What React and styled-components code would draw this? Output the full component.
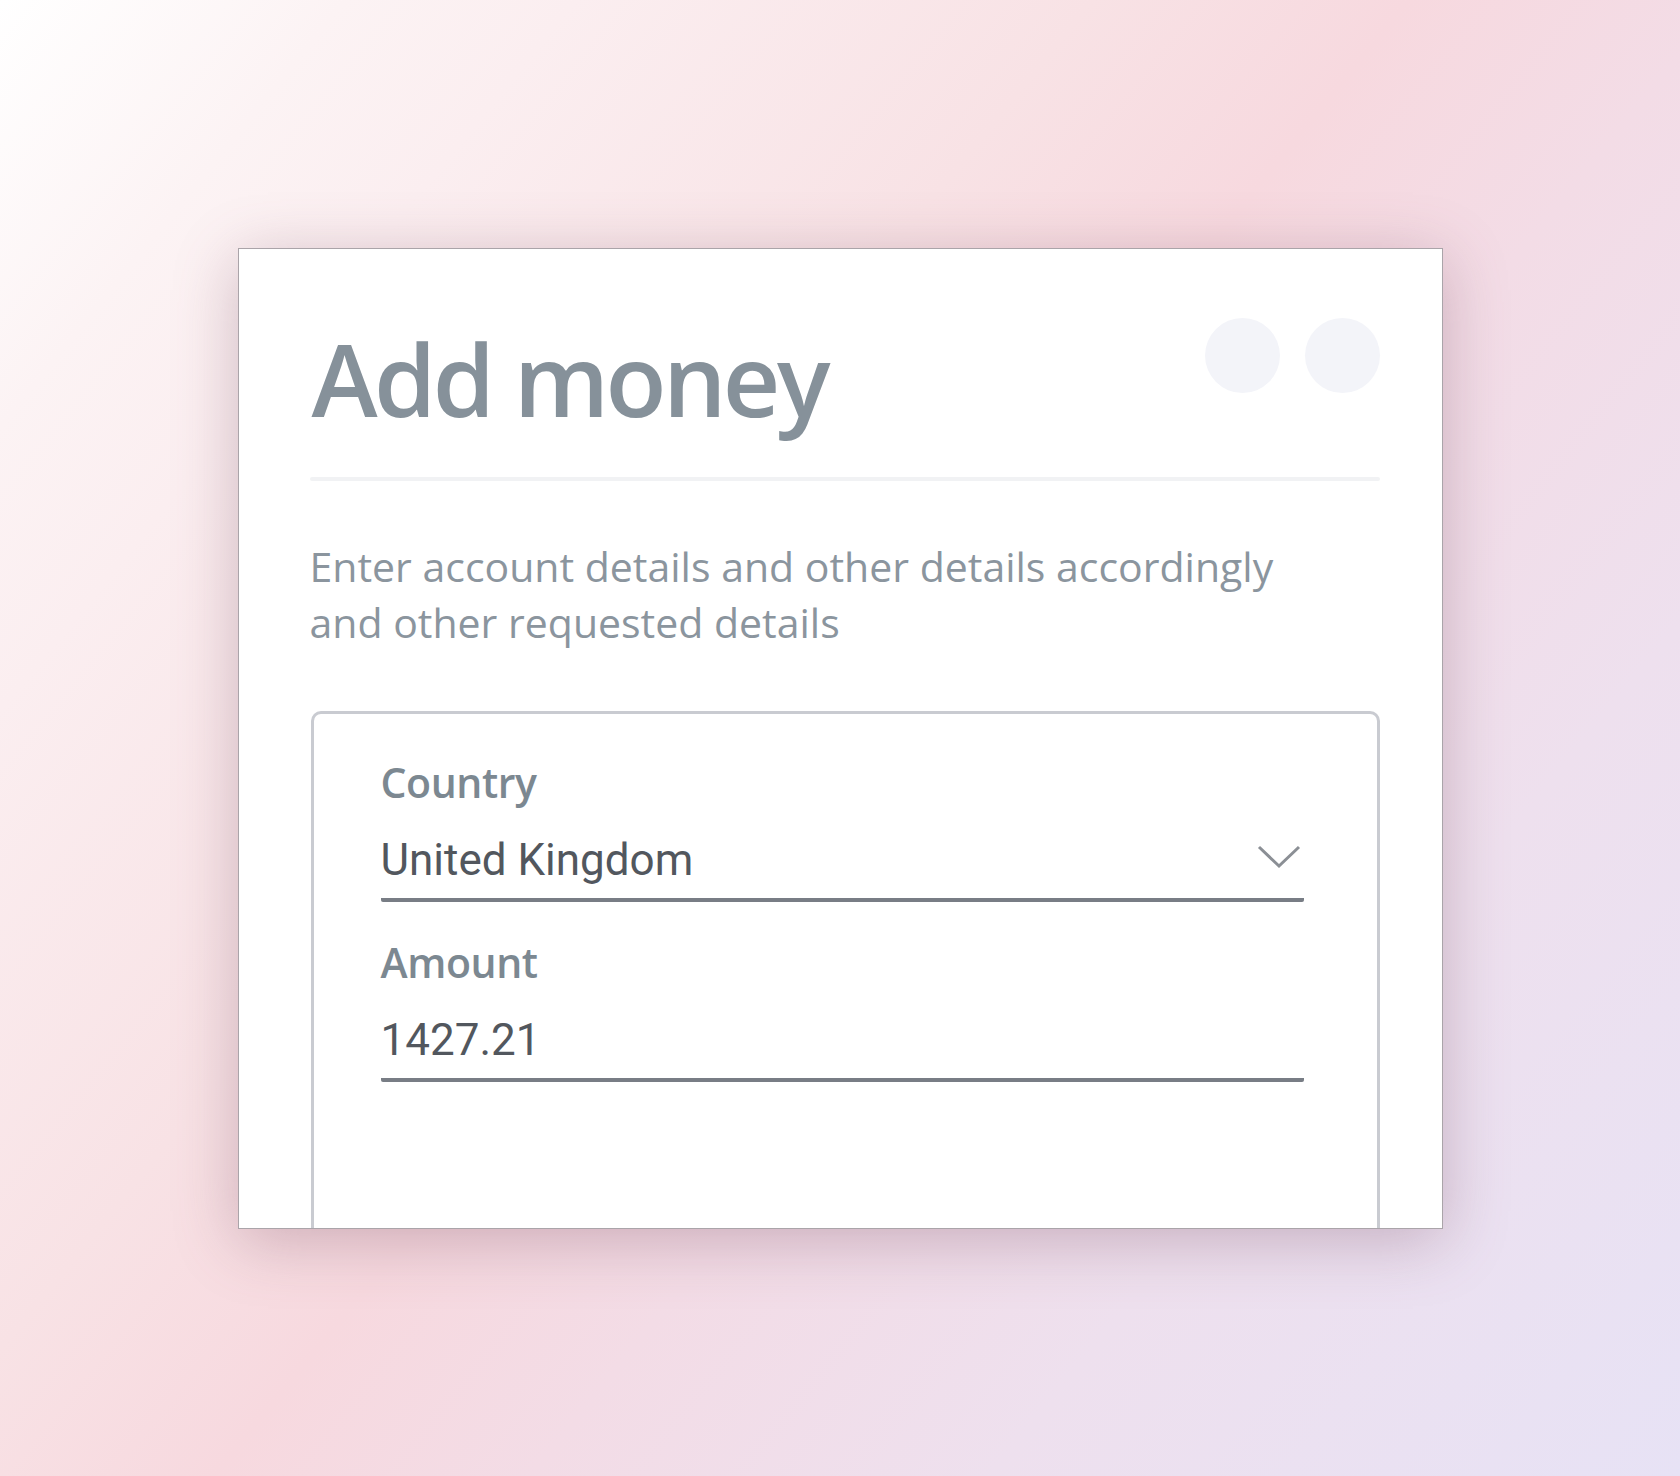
import React from "react";
import styled, { createGlobalStyle } from "styled-components";

const GlobalStyle = createGlobalStyle`
  html, body {
    margin: 0;
    padding: 0;
  }

  body {
    font-family: "Open Sans", "Noto Sans", sans-serif;
    background: linear-gradient(
      129deg,
      #ffffff 0%,
      #fcf3f4 12%,
      #fbeef0 20%,
      #f8e2e5 38%,
      #f7d9df 49%,
      #f3dce6 60%,
      #eee0ee 76%,
      #e7e2f5 100%
    );
  }
`;

const App = () => {
  return (
    <>
      <GlobalStyle />
      <Page>
        <Card>
          <Header>
            <Title>Add money</Title>
            <Dots>
              <Dot />
              <Dot />
            </Dots>
          </Header>
          <Divider />
          <Intro>
            Enter account details and other details accordingly and other
            requested details
          </Intro>
          <FormBox>
            <Field>
              <Label>Country</Label>
              <ValueRow>
                <Value>United Kingdom</Value>
                <Chevron viewBox="0 0 44 24">
                  <polyline points="2,2 22,21 42,2" />
                </Chevron>
              </ValueRow>
            </Field>
            <Field>
              <Label>Amount</Label>
              <ValueRow>
                <Value>1427.21</Value>
              </ValueRow>
            </Field>
          </FormBox>
        </Card>
      </Page>
    </>
  );
};

const Page = styled.div`
  height: 1476px;
  display: flex;
  align-items: center;
  justify-content: center;
`;

const Card = styled.div`
  box-sizing: border-box;
  width: 1205px;
  height: 981px;
  display: flex;
  flex-direction: column;
  padding: 69px 62px 0 71px;
  background-color: #fff;
  border: 1px solid #aaa4a9;
  box-shadow: 0 12px 60px rgba(120, 80, 100, 0.33);
  overflow: hidden;
`;

const Header = styled.div`
  display: flex;
  justify-content: space-between;
  align-items: flex-start;
`;

const Title = styled.h1`
  margin: 10px 0 0 2px;
  font-family: "Open Sans", sans-serif;
  font-size: 100px;
  font-weight: 600;
  line-height: 100px;
  letter-spacing: -3.6px;
  color: #86919a;
`;

const Dots = styled.div`
  display: flex;
  gap: 25px;
`;

const Dot = styled.div`
  width: 75px;
  height: 75px;
  border-radius: 50%;
  background-color: #f3f4f9;
`;

const Divider = styled.div`
  height: 4px;
  margin-top: 49px;
  border-radius: 2px;
  background-color: #f1f2f4;
`;

const Intro = styled.p`
  max-width: 1000px;
  margin: 57px 0 0;
  font-family: "Open Sans", sans-serif;
  font-size: 41px;
  font-weight: 400;
  line-height: 56px;
  color: #8b959e;
`;

const FormBox = styled.div`
  flex: 1;
  display: flex;
  flex-direction: column;
  gap: 35px;
  margin: 61px 0 0 1px;
  padding: 43px 73px 0 67px;
  border: 3px solid #c9cbd1;
  border-bottom: none;
  border-radius: 10px 10px 0 0;
`;

const Field = styled.div`
  display: flex;
  flex-direction: column;
  gap: 25px;
`;

const Label = styled.div`
  font-family: "Open Sans", sans-serif;
  font-size: 41px;
  font-weight: 600;
  line-height: 50px;
  letter-spacing: -0.4px;
  color: #7c8891;
`;

const ValueRow = styled.div`
  display: flex;
  justify-content: space-between;
  align-items: flex-start;
  padding: 0 3px 10px 0;
  border-bottom: 4px solid #787d85;
  border-radius: 2px;
`;

const Value = styled.div`
  font-family: Roboto, "Liberation Sans", sans-serif;
  font-size: 44px;
  font-weight: 400;
  line-height: 56px;
  color: #52575e;
`;

const Chevron = styled.svg`
  width: 44px;
  height: 24px;
  margin-top: 13px;
  fill: none;
  stroke: #8b8f95;
  stroke-width: 3;
`;

export default App;
